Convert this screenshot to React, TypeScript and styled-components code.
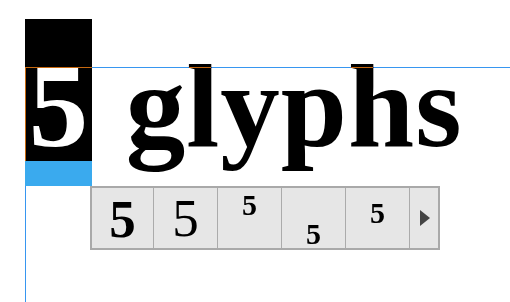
import React from "react";
import styled, {createGlobalStyle} from "styled-components";

const GlobalStyle = createGlobalStyle`
  html, body {
    margin: 0;
    background: #ffffff;
  }
  #root {
    width: 510px;
    height: 302px;
    overflow: hidden;
  }
`;

const Stage = styled.div`
  position: relative;
  isolation: isolate;
  background: #ffffff;
  width: 510px;
  height: 302px;
  box-sizing: border-box;
  padding: 19px 0 0 25px;
  font-family: "Liberation Serif", "Times New Roman", serif;
`;

// guide lines drawn over the sample; difference blend turns the orange blue on white
const Guides = styled.div`
  position: absolute;
  left: 25px;
  top: 67px;
  right: 0;
  bottom: 0;
  border-top: 1px solid #c8690f;
  border-left: 1px solid #c8690f;
  mix-blend-mode: difference;
  z-index: 1;
  pointer-events: none;
`;

const HeadRow = styled.div`
  display: flex;
  align-items: flex-start;
`;

const Selection = styled.div`
  display: flex;
  flex-direction: column;
  width: 67px;
`;

const SelectedGlyph = styled.div`
  height: 142px;
  box-sizing: border-box;
  background: #000000;
  color: #ffffff;
  font-weight: bold;
  font-size: 119px;
  line-height: 109px;
  padding-top: 33px;
  text-align: center;
`;

const Cursor = styled.div`
  position: relative;
  z-index: 2;
  height: 25px;
  background: #3aaaee;
`;

const Title = styled.div`
  font-weight: bold;
  font-size: 119px;
  line-height: 109px;
  letter-spacing: 1px;
  padding: 33px 0 0 3px;
  color: #000000;
  white-space: pre;
`;

const Toolbar = styled.div`
  display: flex;
  margin-left: 65px;
  width: 350px;
  height: 64px;
  box-sizing: border-box;
  border: 2px solid #a9a9a9;
  background: #e6e6e6;
`;

const Cell = styled.div<{$w: number; $first?: boolean}>`
  width: ${(p) => p.$w}px;
  flex: none;
  box-sizing: border-box;
  border-left: ${(p) => (p.$first ? "none" : "1px solid #ababab")};
  display: flex;
  justify-content: center;
  align-items: center;
`;

const Alt = styled.span<{$size: number; $top: number; $bold?: boolean}>`
  align-self: flex-start;
  font-size: ${(p) => p.$size}px;
  line-height: ${(p) => p.$size}px;
  font-weight: ${(p) => (p.$bold ? "bold" : "normal")};
  padding-top: ${(p) => p.$top}px;
  color: #000000;
`;

const NextArrow = styled.div`
  width: 0;
  height: 0;
  margin-left: 2px;
  border-top: 8px solid transparent;
  border-bottom: 8px solid transparent;
  border-left: 10px solid #444444;
`;

const alternates = [
  {w: 61, size: 53, top: 5, bold: true},
  {w: 64, size: 53, top: 4, bold: false},
  {w: 64, size: 30, top: 2, bold: true},
  {w: 64, size: 30, top: 31, bold: true},
  {w: 64, size: 30, top: 10, bold: true},
];

export default function App() {
  return (
    <>
      <GlobalStyle/>
      <Stage>
        <Guides/>
        <HeadRow>
          <Selection>
            <SelectedGlyph>5</SelectedGlyph>
            <Cursor/>
          </Selection>
          <Title> glyphs</Title>
        </HeadRow>
        <Toolbar>
          {alternates.map((a, i) => (
            <Cell key={i} $w={a.w} $first={i === 0}>
              <Alt $size={a.size} $top={a.top} $bold={a.bold}>5</Alt>
            </Cell>
          ))}
          <Cell $w={29}>
            <NextArrow/>
          </Cell>
        </Toolbar>
      </Stage>
    </>
  );
}
